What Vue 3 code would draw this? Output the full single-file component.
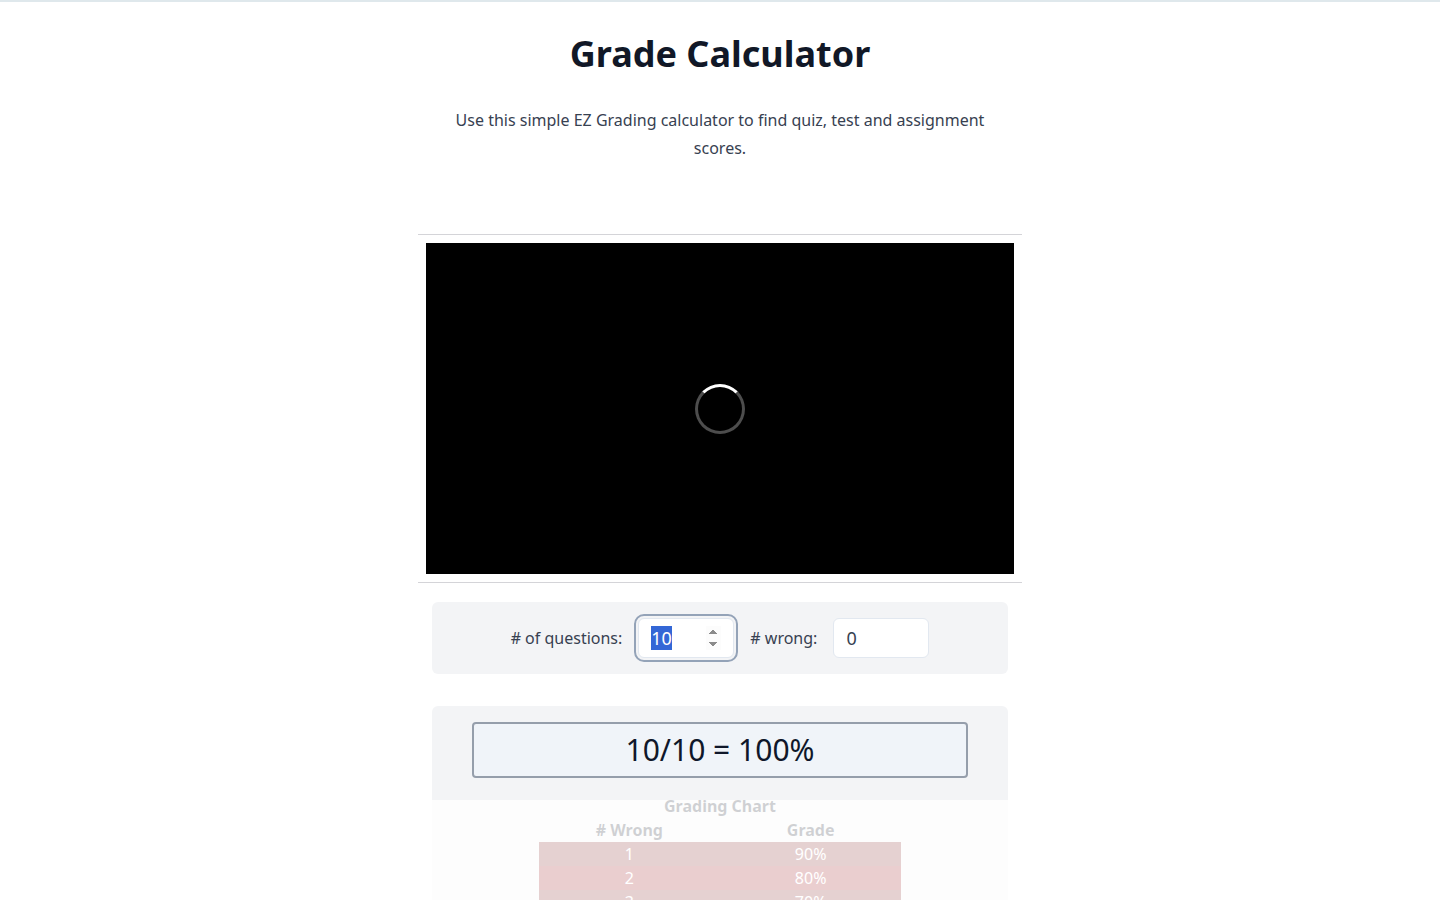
<script setup>
import { computed, onMounted, ref } from 'vue'

const questions = ref(10)
const wrong = ref(0)
const questionsInput = ref(null)

const grade = (missed) =>
  questions.value > 0 ? Math.round(((questions.value - missed) / questions.value) * 100) : 0

const result = computed(
  () => `${questions.value - wrong.value}/${questions.value} = ${grade(wrong.value)}%`
)

const rows = computed(() =>
  Array.from({ length: Math.max(0, Number(questions.value) || 0) }, (_, i) => ({
    missed: i + 1,
    grade: `${grade(i + 1)}%`
  }))
)

onMounted(() => {
  questionsInput.value.focus()
  questionsInput.value.select()
})
</script>

<template>
  <div class="page">
    <header class="intro">
      <h1>Grade Calculator</h1>
      <p>Use this simple EZ Grading calculator to find quiz, test and assignment scores.</p>
    </header>

    <main>
      <section class="video" aria-label="Video">
        <div class="player">
          <div class="spinner" role="status" aria-label="Loading"></div>
        </div>
      </section>

      <form class="card form" @submit.prevent>
        <label for="questions"># of questions:</label>
        <input id="questions" ref="questionsInput" v-model="questions" type="number" min="1" />
        <label for="wrong"># wrong:</label>
        <input id="wrong" v-model="wrong" type="number" min="0" />
      </form>

      <section class="card">
        <output class="result" for="questions wrong">{{ result }}</output>
        <table>
          <caption>Grading Chart</caption>
          <thead>
            <tr>
              <th scope="col"># Wrong</th>
              <th scope="col">Grade</th>
            </tr>
          </thead>
          <tbody>
            <tr v-for="row in rows" :key="row.missed">
              <td>{{ row.missed }}</td>
              <td>{{ row.grade }}</td>
            </tr>
          </tbody>
        </table>
      </section>
    </main>

    <div class="bottom-bar"></div>
  </div>
</template>

<style>
body {
  background: #fff;
}
</style>

<style scoped>
.page {
  box-sizing: border-box;
  min-height: 100vh;
  padding-bottom: 100px;
  border-top: 2px solid #dfe8ec;
  color: #374151;
  font-family: "Noto Sans", sans-serif;
  font-size: 16px;
  line-height: 24px;
}

.intro {
  max-width: 576px;
  margin: 0 auto;
  padding: 32px 0 72px;
  text-align: center;
}

h1 {
  margin: 0 0 32px;
  color: #111827;
  font-size: 36px;
  font-weight: 700;
  line-height: 40px;
}

.intro p {
  margin: 0;
  line-height: 28px;
}

.video {
  box-sizing: border-box;
  max-width: 604px;
  margin: 0 auto 19px;
  padding: 8px;
  border-top: 1px solid #d4d4d8;
  border-bottom: 1px solid #d4d4d8;
}

.player {
  box-sizing: border-box;
  display: flex;
  align-items: center;
  justify-content: center;
  aspect-ratio: 16 / 9;
  padding-top: 1px;
  background: #000;
}

.spinner {
  box-sizing: border-box;
  width: 50px;
  height: 50px;
  border: 3px solid rgba(255, 255, 255, 0.3);
  border-top-color: #fff;
  border-radius: 50%;
}

.card {
  box-sizing: border-box;
  max-width: 576px;
  margin: 0 auto 32px;
  padding: 16px;
  border-radius: 6px;
  background: #f3f4f6;
}

.form {
  display: flex;
  align-items: center;
  justify-content: center;
  gap: 16px;
}

input {
  box-sizing: border-box;
  width: 96px;
  height: 40px;
  margin: 0;
  padding: 8px 12px;
  border: 1px solid #e2e8f0;
  border-radius: 6px;
  background: #fff;
  color: #374151;
  font-family: inherit;
  font-size: 18px;
  line-height: 28px;
}

input:focus {
  outline: 2px solid #94a3b8;
  outline-offset: 2px;
}

input::selection {
  background: #3367d6;
  color: #fff;
}

.result {
  display: block;
  margin: 0 24px 16px;
  padding: 8px;
  border: 2px solid #959eab;
  border-radius: 4px;
  background: #f0f4f9;
  color: #0f172a;
  font-size: 30px;
  line-height: 36px;
  text-align: center;
}

table {
  width: 66.6667%;
  margin: 0 auto;
  border-collapse: collapse;
  table-layout: fixed;
  text-align: center;
}

caption,
th {
  color: #111827;
  font-weight: 700;
}

th,
td {
  padding: 0;
}

tbody tr {
  background: #7f1d1d;
  color: #fff;
}

tbody tr:nth-child(even) {
  background: #980a12;
}

.bottom-bar {
  position: fixed;
  right: 0;
  bottom: 0;
  left: 0;
  height: 100px;
  background: rgba(255, 255, 255, 0.8);
}
</style>
